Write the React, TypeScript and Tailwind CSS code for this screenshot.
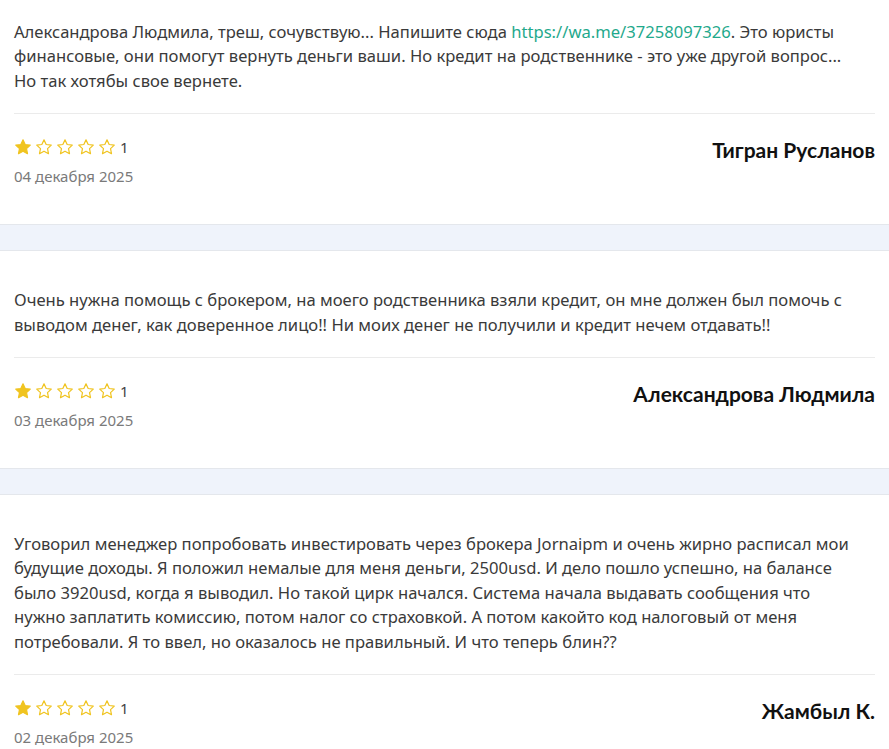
import React from "react";

type Review = {
  text: React.ReactNode;
  author: string;
  date: string;
  rating: number;
};

const reviews: Review[] = [
  {
    text: (
      <>
        Александрова Людмила, треш, сочувствую... Напишите сюда{" "}
        <a href="#" className="text-[#1fa98c]">
          https://wa.me/37258097326
        </a>
        . Это юристы финансовые, они помогут вернуть деньги ваши. Но кредит на родственнике - это уже другой
        вопрос... Но так хотябы свое вернете.
      </>
    ),
    author: "Тигран Русланов",
    date: "04 декабря 2025",
    rating: 1,
  },
  {
    text: "Очень нужна помощь с брокером, на моего родственника взяли кредит, он мне должен был помочь с выводом денег, как доверенное лицо!! Ни моих денег не получили и кредит нечем отдавать!!",
    author: "Александрова Людмила",
    date: "03 декабря 2025",
    rating: 1,
  },
  {
    text: "Уговорил менеджер попробовать инвестировать через брокера Jornaipm и очень жирно расписал мои будущие доходы. Я положил немалые для меня деньги, 2500usd. И дело пошло успешно, на балансе было 3920usd, когда я выводил. Но такой цирк начался. Система начала выдавать сообщения что нужно заплатить комиссию, потом налог со страховкой. А потом какойто код налоговый от меня потребовали. Я то ввел, но оказалось не правильный. И что теперь блин??",
    author: "Жамбыл К.",
    date: "02 декабря 2025",
    rating: 1,
  },
];

const Star = ({ filled }: { filled: boolean }) => (
  <svg width="18" height="18" viewBox="0 0 24 24" className="shrink-0">
    <path
      d="M12 2.5l2.9 6.2 6.8.8-5 4.7 1.3 6.7L12 17.6l-6 3.3 1.3-6.7-5-4.7 6.8-.8z"
      fill={filled ? "#f0c420" : "#fff"}
      stroke="#f0c420"
      strokeWidth="1.6"
      strokeLinejoin="round"
    />
  </svg>
);

const ReviewCard = ({ review, first }: { review: Review; first?: boolean }) => (
  <div className={`bg-white px-[14px] pb-[38px] ${first ? "pt-[20px]" : "pt-[37px]"}`}>
    <p className="pr-[10px] text-[16.6px] leading-[24.4px] text-[#3a3a3a]">{review.text}</p>
    <div className="mt-[20px] border-t border-[#ebebeb] pt-[24px]">
      <div className="flex items-start justify-between">
        <div className="flex flex-col">
          <div className="flex items-center gap-[3px]">
            {[0, 1, 2, 3, 4].map((i) => (
              <Star key={i} filled={i < review.rating} />
            ))}
            <span className="ml-[1px] text-[15px] leading-[18px] text-[#444]">{review.rating}</span>
          </div>
          <span className="mt-[10px] text-[15px] leading-[20px] text-[#7a7a7a]">{review.date}</span>
        </div>
        <span className="-mt-[1px] font-['Lato',sans-serif] text-[21px] leading-[26px] font-bold text-[#111]">
          {review.author}
        </span>
      </div>
    </div>
  </div>
);

export default function App() {
  return (
    <div className="h-[749px] w-[889px] overflow-hidden bg-white font-['Noto_Sans',sans-serif]">
      {reviews.map((r, i) => (
        <div key={i}>
          {i > 0 && <div className="h-[27px] border-y border-[#e4e7ec] bg-[#eff3fb]" />}
          <ReviewCard review={r} first={i === 0} />
        </div>
      ))}
    </div>
  );
}
